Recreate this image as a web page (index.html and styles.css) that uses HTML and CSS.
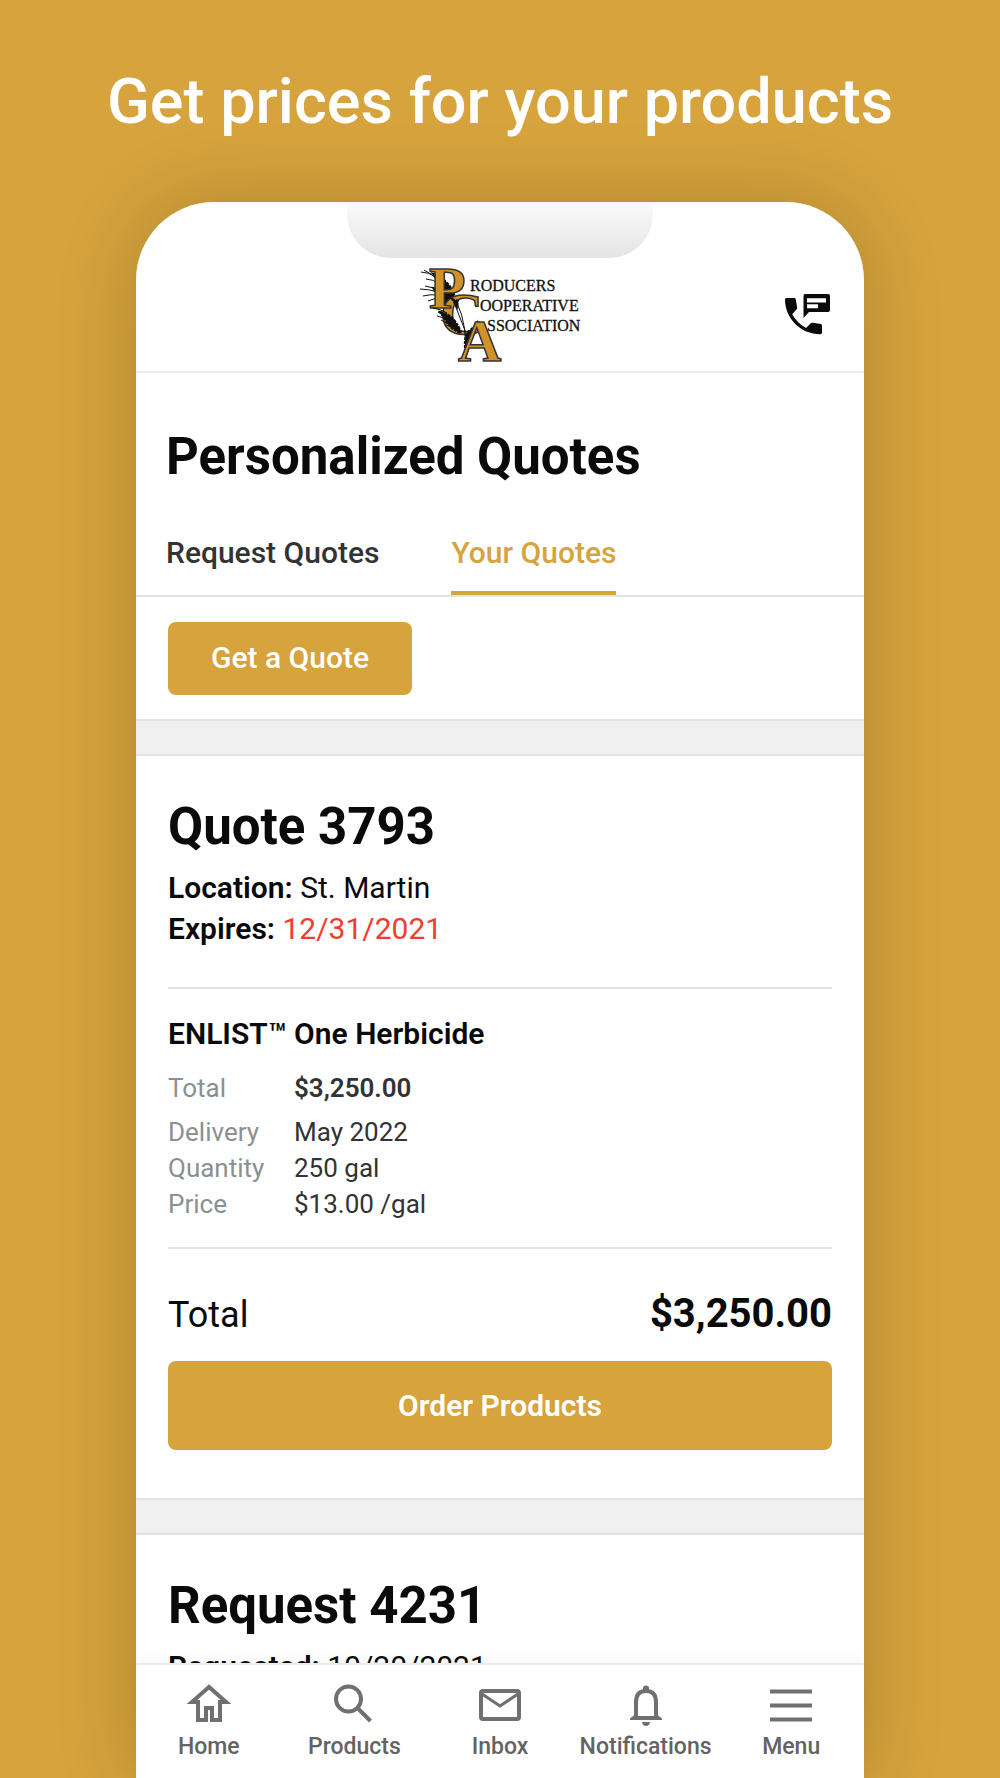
FILE: index.html
```html
<!DOCTYPE html>
<html lang="en">
<head>
    <meta charset="UTF-8">
    <meta name="viewport" content="width=device-width, initial-scale=1.0">
    <title>Personalized Quotes</title>
    <link rel="stylesheet" href="styles.css">
</head>
<body>
    <h1 class="headline">Get prices for your products</h1>

    <main class="phone">
        <div class="notch"></div>

        <header class="topbar">
            <svg class="logo" viewBox="-2 -1 164 97" role="img" aria-label="Producers Cooperative Association">
                <!-- wheat behind the letters -->
                <g class="wheat">
                    <path d="M1 5Q8 5 16 10M4 3Q12 7 18 13M6 12Q14 12 20 18M0 22Q8 22 18 25M3 29Q10 27 20 28M5 19Q12 20 20 24M8 34Q14 31 22 31"/>
                    <path class="grain" d="M13 7Q26 12 31 21T37 38Q26 34 22 24T13 7ZM13 21Q22 22 28 29L31 38Q20 34 13 21Z"/>
                </g>
                <text class="initial" x="20" y="67">C</text>
                <text class="initial" x="9" y="41">P</text>
                <g class="wheat">
                    <path d="M13 41Q20 42 27 46M17 49Q22 50 28 53M18 45Q26 50 34 56M21 53Q26 56 33 59M25 58 36 60"/>
                    <path class="grain" d="M20 45Q30 47 35 54T41 66Q32 63 28 57T20 45Z"/>
                    <path class="grain" d="M57 56Q56 66 51 71T45 81Q44 68 49 64T57 56ZM32 32 38 34 37 40Z"/>
                    <path d="M37 36Q48 58 45 94M35 38 46 66M53 68 45 94"/>
                </g>
                <text class="initial" x="38" y="94">A</text>
                <text x="50" y="24">RODUCERS</text>
                <text x="60" y="44">OOPERATIVE</text>
                <text x="67" y="64">SSOCIATION</text>
            </svg>
            <button class="contact" aria-label="Contact us">
                <svg viewBox="0 0 45 41">
                    <path d="M1.500 4H9.500Q10.500 4 10.700 5L12.200 13.500Q12.300 14.500 11.600 15.200L7.200 20.200Q12 29 21 34L25.800 29.300Q26.500 28.600 27.500 28.700L35.800 30Q37 30.200 37 31.400V38.800Q37 40.200 35.600 40.200C15 40.200 0 24 0 5.500Q0 4 1.500 4Z"/>
                    <path fill-rule="evenodd" d="M20 0H43Q45 0 45 2V16Q45 18 43 18H24L18.500 24V2Q18.500 0 20 0ZM22 4.200V8.500H41V4.200ZM22 10.200V14.200H33V10.200Z"/>
                </svg>
            </button>
        </header>

        <div class="content">
            <h2 class="page-title">Personalized Quotes</h2>

            <nav class="tabs">
                <a href="#request">Request Quotes</a>
                <a href="#yours" class="active">Your Quotes</a>
            </nav>

            <div class="get-quote">
                <button class="btn">Get a Quote</button>
            </div>

            <section class="card">
                <h2>Quote 3793</h2>
                <p><b>Location:</b> St. Martin</p>
                <p><b>Expires:</b> <span class="expired">12/31/2021</span></p>

                <div class="product">
                    <h3>ENLIST™ One Herbicide</h3>
                    <dl>
                        <dt class="sum">Total</dt><dd class="sum">$3,250.00</dd>
                        <dt>Delivery</dt><dd>May 2022</dd>
                        <dt>Quantity</dt><dd>250 gal</dd>
                        <dt>Price</dt><dd>$13.00 /gal</dd>
                    </dl>
                </div>

                <div class="total">
                    <span>Total</span>
                    <strong>$3,250.00</strong>
                </div>
                <button class="btn btn-wide">Order Products</button>
            </section>

            <section class="card">
                <h2>Request 4231</h2>
                <p><b>Requested:</b> 10/20/2021</p>
            </section>
        </div>

        <nav class="bottom-nav">
            <a href="#home">
                <svg viewBox="0 0 42 42"><path d="M21 4 4 19H10V37H18V25H24V37H32V19H38Z"/></svg>
                Home
            </a>
            <a href="#products">
                <svg viewBox="0 0 42 42"><circle cx="15.500" cy="16" r="12.500"/><path d="M24.500 25 37.500 38"/></svg>
                Products
            </a>
            <a href="#inbox">
                <svg viewBox="0 0 42 42"><rect x="2" y="8" width="38" height="28" rx="2"/><path class="thin" d="M3 11 21 23 39 11"/></svg>
                Inbox
            </a>
            <a href="#notifications">
                <svg viewBox="0 0 42 42"><path d="M11 34V19Q11 8 21 8T31 19V34"/><path class="solid" d="M5 37V35.500L10 31.500V33H32V31.500L37 35.500V37ZM18 7.500V5Q18 2.500 21 2.500T24 5V7.500ZM17 39H25Q24.500 43 21 43T17 39Z"/></svg>
                Notifications
            </a>
            <a href="#menu">
                <svg viewBox="0 0 42 42"><path d="M0 8.500H42M0 22.500H42M0 36.500H42"/></svg>
                Menu
            </a>
        </nav>
    </main>
</body>
</html>
```
FILE: styles.css
```css
*{
    box-sizing: border-box;
    margin: 0;
    padding: 0;
}

body{
    display: flex;
    flex-direction: column;
    height: 100vh;
    padding: 0 136px;
    overflow: hidden;
    background-color: #d6a33c;
    color: #0a0a0a;
    font-family: Roboto, sans-serif;
    font-size: 30px;
    line-height: 41px;
}

a{
    color: inherit;
    text-decoration: none;
}

button{
    border: none;
    font: inherit;
    cursor: pointer;
}

.headline{
    padding: 64px 0 62px;
    margin: 0 -136px;
    color: white;
    text-align: center;
    font-size: 63px;
    font-weight: 500;
    line-height: 76px;
}

/* Phone frame */
.phone{
    position: relative;
    display: flex;
    flex-direction: column;
    flex: 1;
    min-height: 0;
    background-color: white;
    border-radius: 78px 78px 0 0;
    box-shadow: 0 0 80px rgba(0, 0, 0, 0.18);
}

.notch{
    width: 42%;
    height: 56px;
    margin: 0 auto;
    border-radius: 0 0 44px 44px;
    background: linear-gradient(#fafafa, #e4e4e4);
}

.topbar{
    display: grid;
    grid-template-columns: 1fr auto 1fr;
    align-items: center;
    padding: 8px 34px;
    border-bottom: 2px solid #ebebeb;
}

.logo{
    grid-column: 2;
    width: 164px;
    height: 97px;
    font-family: "Liberation Serif", serif;
    font-size: 16px;
    fill: #111;
    overflow: visible;
}

.logo text{
    stroke: #111;
    stroke-width: 0.3px;
}

.logo .initial{
    font-size: 60px;
    font-weight: bold;
    fill: #d1922a;
    stroke: #333;
    stroke-width: 1.5px;
}

.wheat{
    fill: none;
    stroke: #111;
    stroke-width: 1px;
}

.wheat .grain{
    fill: #111;
    stroke-width: 2px;
    stroke-dasharray: 3 1;
}

.contact{
    justify-self: end;
    background: none;
}

.contact svg{
    display: block;
    width: 45px;
    height: 41px;
    fill: #0a0a0a;
}

/* Scrolling part */
.content{
    flex: 1;
    min-height: 0;
    overflow: hidden;
}

h2{
    font-size: 51px;
    font-weight: 700;
    line-height: 60px;
}

.page-title{
    padding: 54px 30px 45px;
}

.tabs{
    display: flex;
    gap: 72px;
    padding: 0 30px;
    border-bottom: 2px solid #e2e2e2;
    color: #333;
    font-weight: 500;
}

.tabs a{
    padding-bottom: 18px;
    border-bottom: 4px solid transparent;
}

.tabs .active{
    border-color: #d6a33c;
    color: #d6a33c;
}

.get-quote{
    padding: 25px 32px 24px;
}

.btn{
    display: block;
    padding: 15px 43px 17px;
    border-radius: 8px;
    background-color: #d6a33c;
    color: white;
    font-weight: 500;
}

.btn-wide{
    width: 100%;
    padding: 24px;
    font-weight: 600;
}

.card{
    padding: 41px 32px 48px;
    border-top: 2px solid #e2e2e2;
}

/* Grey gap above every card */
.card::before{
    content: "";
    display: block;
    height: 33px;
    margin: -41px -32px 41px;
    background-color: #f0f0f0;
    border-bottom: 2px solid #e2e2e2;
}

.card h2{
    margin-bottom: 10px;
}

.card b{
    font-weight: 600;
}

.expired{
    color: #f23c2d;
}

.product{
    margin: 38px 0;
    padding: 24px 0 25px;
    border-top: 2px solid #e2e2e2;
    border-bottom: 2px solid #e2e2e2;
}

.product h3{
    font-size: 30px;
    font-weight: 600;
}

.product dl{
    display: grid;
    grid-template-columns: 126px 1fr;
    padding-top: 16px;
    font-size: 26px;
    line-height: 36px;
}

.product dt{
    color: #8b9090;
}

.product dd{
    color: #333;
}

.product .sum{
    margin-bottom: 8px;
}

.product dd.sum{
    font-weight: 600;
}

.total{
    display: flex;
    justify-content: space-between;
    align-items: baseline;
    margin-bottom: 19px;
    font-size: 36px;
    line-height: 53px;
}

.total strong{
    font-size: 40px;
    font-weight: 700;
}

.bottom-nav{
    display: grid;
    grid-template-columns: repeat(5, 1fr);
    padding: 18px 0;
    border-top: 2px solid #ebebeb;
    box-shadow: 0 -4px 12px rgba(0, 0, 0, 0.03);
    color: #636363;
    font-size: 23px;
    font-weight: 500;
    line-height: 26px;
}

.bottom-nav a{
    display: flex;
    flex-direction: column;
    align-items: center;
    gap: 9px;
}

.bottom-nav svg{
    width: 42px;
    height: 42px;
    overflow: visible;
    fill: none;
    stroke: #707070;
    stroke-width: 4px;
}

.bottom-nav .thin{
    stroke-width: 3px;
}

.bottom-nav .solid{
    fill: #707070;
    stroke: none;
}
```
